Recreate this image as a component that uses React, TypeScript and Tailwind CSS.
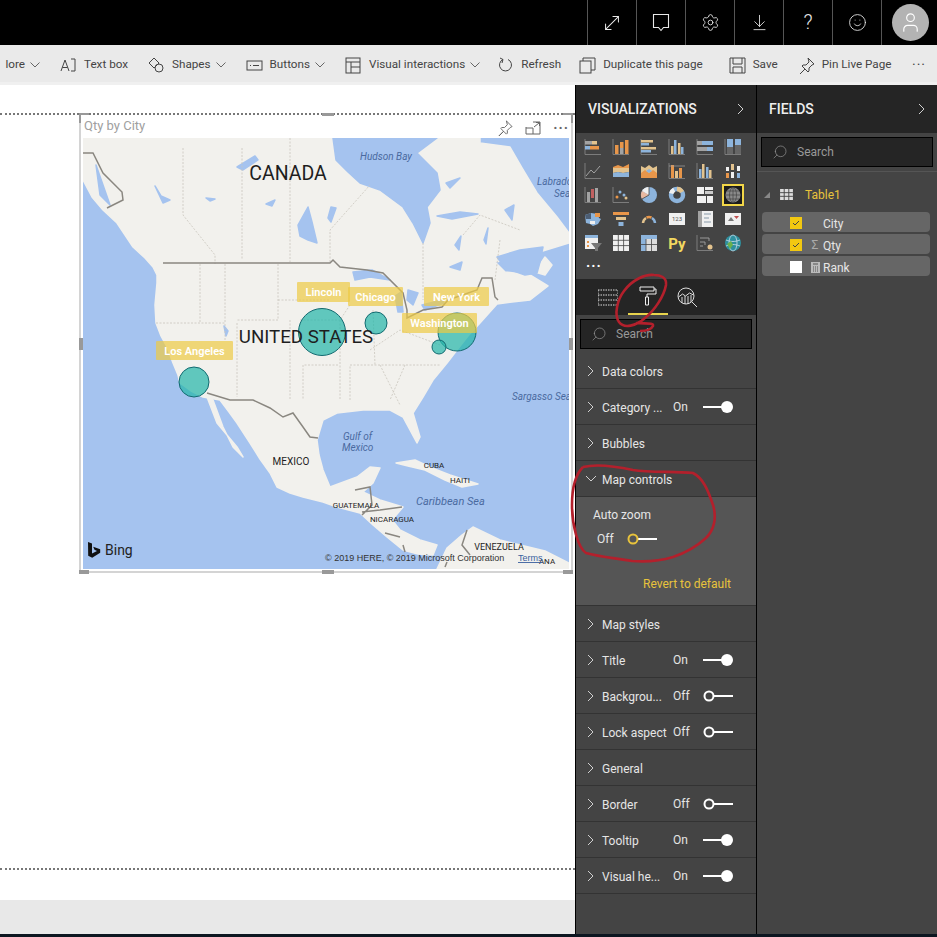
import type { ReactNode } from "react";
import { ArrowDownToLine, MoveDiagonal, Search, Settings, Smile, User } from "lucide-react";

const O = "#e8964a";
const B = "#8db4dc";
const T = "#e3c38e";
const G = "#a3a3a3";
const W = "#f0f0f0";
const A = "#8a8a8a";

function Chevron({ open = false }: { open?: boolean }) {
  return (
    <svg width="10" height="12" viewBox="0 0 10 12" fill="none" stroke="#d0d0d0" strokeWidth="1">
      {open ? <path d="M0 3l5 5 5-5" /> : <path d="M2 1l5 5-5 5" />}
    </svg>
  );
}

function Down() {
  return (
    <svg width="10" height="6" viewBox="0 0 10 6" fill="none" stroke="#666" strokeWidth="1">
      <path d="M0.5 0.5l4.5 4.5 4.5-4.5" />
    </svg>
  );
}

function Toggle({ on }: { on: boolean }) {
  return (
    <svg width="30" height="14" viewBox="0 0 30 14">
      {on ? (
        <>
          <rect x="0" y="6" width="20" height="2" fill="#fff" />
          <circle cx="24" cy="7" r="6" fill="#fff" />
        </>
      ) : (
        <>
          <rect x="10" y="6" width="20" height="2" fill="#fff" />
          <circle cx="6" cy="7" r="4.5" fill="none" stroke="#fff" strokeWidth="2" />
        </>
      )}
    </svg>
  );
}

function Section({ label, state }: { label: string; state?: "On" | "Off" }) {
  return (
    <div className="flex h-9 items-center border-b border-[#333] pl-[10px] pt-[1px]">
      <div className="w-4">
        <Chevron />
      </div>
      <div className="w-[71px] whitespace-nowrap pt-[2px] text-[#e6e6e6]">{label}</div>
      {state && (
        <>
          <div className="w-[30px] text-[#e6e6e6]">{state}</div>
          <Toggle on={state === "On"} />
        </>
      )}
    </div>
  );
}

function ToolItem({ icon, label, menu, className = "" }: { icon: ReactNode; label: string; menu?: boolean; className?: string }) {
  return (
    <div className={`flex items-center gap-[7px] whitespace-nowrap ${className}`}>
      {icon}
      <span>{label}</span>
      {menu && (
        <span className="ml-[-2px]">
          <Down />
        </span>
      )}
    </div>
  );
}

function ToolIcon({ children }: { children: ReactNode }) {
  return (
    <svg width="17" height="17" viewBox="0 0 17 17" fill="none" stroke="#444" strokeWidth="1">
      {children}
    </svg>
  );
}

function Viz({ children, selected = false }: { children: ReactNode; selected?: boolean }) {
  return (
    <div className={selected ? "flex h-[22px] w-[22px] items-center justify-center border-2 border-[#f2d648] bg-[#1c1c1c]" : "flex h-[22px] w-[22px] items-center justify-center"}>
      <svg width="18" height="18" viewBox="0 0 18 18">
        {children}
      </svg>
    </div>
  );
}

const axis = <path d="M1 1v15.5h16" fill="none" stroke={A} strokeWidth="0.8" />;

const vizIcons: ReactNode[] = [
  <>{axis}<rect x="1" y="3" width="7" height="3.5" fill={G} /><rect x="8" y="3" width="5" height="3.5" fill={T} /><rect x="1" y="8" width="5" height="3.5" fill={B} /><rect x="6" y="8" width="9" height="3.5" fill={O} /></>,
  <>{axis}<rect x="3" y="7" width="3.5" height="9" fill={O} /><rect x="8" y="4" width="3.5" height="6" fill={O} /><rect x="8" y="10" width="3.5" height="6" fill={G} /><rect x="13" y="2" width="3.5" height="14" fill={O} /></>,
  <>{axis}<rect x="1" y="2" width="12" height="2.5" fill={T} /><rect x="1" y="5" width="8" height="2.5" fill={B} /><rect x="1" y="9" width="15" height="2.5" fill={T} /><rect x="1" y="12" width="10" height="2.5" fill={B} /></>,
  <>{axis}<rect x="3" y="8" width="2.5" height="8" fill={T} /><rect x="6" y="2" width="2.5" height="14" fill={B} /><rect x="10" y="5" width="2.5" height="11" fill={T} /><rect x="13" y="9" width="2.5" height="7" fill={B} /></>,
  <>{axis}<rect x="1" y="3" width="5" height="4" fill={G} /><rect x="6" y="3" width="11" height="4" fill={B} /><rect x="1" y="9" width="10" height="4" fill={G} /><rect x="11" y="9" width="6" height="4" fill={B} /></>,
  <>{axis}<rect x="3" y="1" width="6" height="8" fill={B} /><rect x="3" y="9" width="6" height="7" fill="#666" /><rect x="11" y="1" width="6" height="6" fill={B} /><rect x="11" y="7" width="6" height="9" fill="#666" /></>,
  <>{axis}<path d="M2 14l5-6 3 3 6-7" fill="none" stroke={G} strokeWidth="1" /></>,
  <><path d="M1 5l5-2 5 2 6-3v4H1z" fill={O} /><path d="M1 6h16v4l-6 1-5-1-5 1z" fill={T} /><path d="M1 11l5-1 5 1 6-1v5H1z" fill={B} /></>,
  <><path d="M1 4l4 2 4-3 4 3 4-2v7H1z" fill={T} /><path d="M1 11l4-3 4 3 4-3 4 3v5H1z" fill={O} /><path d="M6 9l3-2 3 2-3 2z" fill={B} /></>,
  <>{axis}<rect x="3" y="3" width="3" height="13" fill={O} /><rect x="7" y="9" width="3" height="7" fill={T} /><rect x="11" y="6" width="3" height="10" fill={O} /><path d="M1 4h16" stroke={G} strokeWidth="0.7" /></>,
  <>{axis}<rect x="3" y="7" width="2.5" height="9" fill={B} /><rect x="6" y="2" width="2.5" height="14" fill={T} /><rect x="10" y="5" width="2.5" height="11" fill={B} /><rect x="13" y="8" width="2.5" height="8" fill={T} /></>,
  <><rect x="2" y="5" width="3" height="4" fill={W} /><rect x="2" y="11" width="3" height="5" fill={O} /><rect x="7" y="2" width="3" height="6" fill={T} /><rect x="7" y="10" width="3" height="6" fill={W} /><rect x="13" y="4" width="3" height="5" fill={W} /><rect x="13" y="11" width="3" height="5" fill={B} /></>,
  <>{axis}<rect x="3" y="6" width="3" height="10" fill={G} /><rect x="7" y="3" width="3" height="9" fill="#c06060" /><rect x="11" y="2" width="3" height="14" fill={G} /></>,
  <>{axis}<circle cx="5" cy="11" r="1.5" fill={O} /><circle cx="8" cy="6" r="1.5" fill={B} /><circle cx="12" cy="9" r="1.5" fill={B} /><circle cx="14" cy="12" r="1.5" fill={T} /></>,
  <><circle cx="9" cy="9" r="8" fill={B} /><path d="M9 9V1a8 8 0 0 0-7 4z" fill={W} /><path d="M9 9L2 5a8 8 0 0 0 0 8z" fill="#e8b8a0" /><path d="M9 1v8l-7 4" fill="none" stroke="#444" strokeWidth="0.8" /></>,
  <><circle cx="9" cy="9" r="6" fill="none" stroke={B} strokeWidth="4.5" /><path d="M9 3a6 6 0 0 1 5 3" fill="none" stroke={T} strokeWidth="4.5" /><path d="M3.2 7.5a6 6 0 0 1 3-3.8" fill="none" stroke={W} strokeWidth="4.5" /></>,
  <><rect x="1" y="1" width="7" height="7" fill={W} /><rect x="9" y="1" width="8" height="3" fill={W} /><rect x="9" y="5" width="8" height="3" fill="#ccc" /><rect x="1" y="10" width="9" height="7" fill={W} /><rect x="11" y="10" width="6" height="7" fill={W} /></>,
  <><circle cx="9" cy="9" r="7.5" fill="#8a8a8a" /><path d="M1.5 9h15M9 1.5v15M3 5h12M3 13h12" stroke="#444" strokeWidth="0.7" /><ellipse cx="9" cy="9" rx="3.5" ry="7.5" fill="none" stroke="#444" strokeWidth="0.7" /></>,
  <><path d="M1 5l6-2 7 1 1 4 2 1-3 5-5 2-3-2-4-1z" fill={B} /><path d="M1 5l6-2v6H2z" fill="#4d5e74" /><path d="M11 3h5v4h-5z" fill={O} /><path d="M6 11h5v3H6z" fill={W} /></>,
  <><rect x="1" y="2" width="16" height="3" fill={O} /><rect x="4" y="7" width="10" height="3" fill={T} /><rect x="6.5" y="12" width="5" height="4" fill={B} /></>,
  <><path d="M3 13a6.5 6.5 0 0 1 3-5" fill="none" stroke={T} strokeWidth="2.5" /><path d="M6.5 7.5a6.5 6.5 0 0 1 5 0" fill="none" stroke={O} strokeWidth="2.5" /><path d="M12 8a6.5 6.5 0 0 1 3 5" fill="none" stroke={B} strokeWidth="2.5" /></>,
  <><rect x="1" y="3" width="16" height="12" fill={W} /><text x="9" y="11" fontSize="6" textAnchor="middle" fill="#555" fontFamily="Roboto, sans-serif">123</text></>,
  <><rect x="2" y="1" width="15" height="16" fill={W} /><rect x="2" y="1" width="4" height="16" fill={G} /><path d="M8 4h7M8 8h5M8 12h7" stroke="#8899aa" strokeWidth="1.2" /></>,
  <><rect x="1" y="3" width="16" height="12" fill={W} /><path d="M4 11l3-4 3 4z" fill="#777" /><path d="M10 6h5l-2.5 3z" fill="#c05050" /></>,
  <><rect x="1" y="1" width="13" height="14" fill={W} /><rect x="1" y="1" width="13" height="3" fill={B} /><rect x="3" y="7" width="2" height="2" fill={O} /><rect x="3" y="11" width="2" height="2" fill={O} /><path d="M7 9h11l-4 5v3h-3v-3z" fill="#777" /></>,
  <><rect x="1" y="1" width="16" height="16" fill={W} /><path d="M6.3 1v16M11.6 1v16M1 6.3h16M1 11.6h16" stroke="#444" strokeWidth="0.8" /></>,
  <><rect x="1" y="1" width="16" height="16" fill="#dcdcdc" /><rect x="1" y="1" width="16" height="4" fill={B} /><rect x="1" y="1" width="5" height="16" fill={B} /><path d="M6 5v12M11.5 5v12M1 10.5h16" stroke="#444" strokeWidth="0.8" /></>,
  <text x="9" y="15" fontSize="15" fontWeight="700" textAnchor="middle" fill="#f2d860" fontFamily="Roboto, sans-serif">Py</text>,
  <>{axis}<path d="M4 4h9M4 8h5M4 12h3M13 4v3M9 8v3" fill="none" stroke={G} strokeWidth="0.9" /><circle cx="14" cy="13" r="2.5" fill={T} /></>,
  <><circle cx="9" cy="9" r="8" fill="#2f8f9e" /><path d="M2 6c5 2 9 2 14 0M2 12c5-2 9-2 14 0" fill="none" stroke="#cde" strokeWidth="0.8" /><ellipse cx="9" cy="9" rx="4" ry="8" fill="none" stroke="#cde" strokeWidth="0.8" /><path d="M3 10l4-3 2 4-3 4z" fill="#6ab04c" /></>,
];

function MapCanvas() {
  const label = "Roboto, 'Liberation Sans', sans-serif";
  const pills: [number, number, number, number, string][] = [
    [297, 282, 53, 20, "Lincoln"],
    [348, 287, 55, 19, "Chicago"],
    [424, 287, 65, 19, "New York"],
    [402, 313, 75, 20, "Washington"],
    [156, 341, 77, 19, "Los Angeles"],
  ];
  return (
    <svg width="486" height="431" viewBox="83 138 486 431" fontFamily={label} className="block">
      <rect x="83" y="138" width="486" height="431" fill="#a5c3ef" />
      {/* land */}
      <g fill="#f2f1ed" stroke="#f2f1ed" strokeWidth="1.5" strokeLinejoin="round">
        <path d="M83 138V180L92 197L103 210L117 223L125 235L133 247L145 258L153 267L157 275L157 283L155 305L156 323L161 336L167 347L173 363L178 375L180 383L191 391L203 397L220 400L229 412L237 423L250 443L260 459L270 473L277 487L290 493L303 497L323 502L337 507L360 513L373 525L387 537L403 550L418 554L433 555L437 545L420 540L400 530L392 520L403 507L380 500L363 492L373 483L380 468L370 467L357 477L330 487L323 470L319 455L317 440L323 420L337 413L363 410L390 410L403 417L410 430L417 443L420 437L413 413L423 397L433 380L447 363L457 350L468 336L480 323L497 304L512 302L530 300L548 286L530 275L505 272L495 262L520 258L569 243V233L557 217L537 193L522 168L510 147L480 143V138Z" />
        <path d="M207 397L217 423L237 447L243 457L233 447L223 427L213 400Z" />
        <path d="M437 569L447 548L462 535L473 527L500 540L545 551L569 563V569Z" />
        <path d="M396 463L415 460L432 468L450 475L478 484L462 487L445 480L425 470L408 466Z" />
        <path d="M545 257L552 265L545 275L535 272Z" />
      </g>
      {/* hudson bay and lakes */}
      <g fill="#a5c3ef" stroke="#a5c3ef" strokeWidth="1.5" strokeLinejoin="round">
        <path d="M333 138L336 160L348 172L360 183L380 190L403 207L413 223L423 243L430 223L427 207L440 190L437 173L417 153L437 138Z" />
        <path d="M497 257L520 250L543 247L540 262L537 273L525 275L505 268Z" />
        <path d="M353 272L372 270L390 280L370 277L355 280Z" />
        <path d="M395 296L401 292L403 312L398 312Z" />
        <path d="M408 290L418 293L413 305L407 300Z" />
        <path d="M422 305L442 300L444 303L425 310Z" />
        <path d="M298 225L308 207L312 222L317 243L308 240L300 236Z" />
        <path d="M237 167L255 156L258 160L243 170Z" />
        <path d="M331 207L336 208L331 222L328 218Z" />
        <path d="M437 216L460 212L478 214L452 219Z" />
        <path d="M446 183L460 178L450 188Z" />
        <path d="M450 267L462 262L460 270Z" />
        <path d="M505 210L514 205L512 220Z" />
        <path d="M155 186L161 196L170 200L163 203Z" />
        <path d="M206 198L215 199L210 201Z" />
        <path d="M266 204L275 200L272 206Z" />
        <path d="M484 240L488 228L486 244Z" />
        <path d="M455 245L461 236L459 250Z" />
        <path d="M224 326L228 331L226 336Z" />
        <path d="M96 165L103 185L110 205L100 195Z" />
      </g>
      {/* state and province lines */}
      <g fill="none" stroke="#c9c5bc" strokeWidth="0.8" strokeDasharray="2 1.5">
        <path d="M183 148V215L215 255V264M242 148V260M290 138V262M330 262V230L370 185" />
        <path d="M423 243V300M500 240L495 280M463 235L480 215L520 230" />
        <path d="M200 264V323M156 323H225V340M225 264V323M237 323V397M278 264V320H237M278 300H330M300 320H340L350 305M290 320V400M340 320V400M338 365H303L303 400M350 400V365H440M380 365L400 405M405 365L390 400M370 350L400 330L440 345M373 310L375 365" />
      </g>
      {/* borders */}
      <g fill="none" stroke="#8a8780" strokeWidth="1.5">
        <path d="M83 153H93L103 173L122 192L123 200L107 208" />
        <path d="M163 263H330L333 260L340 267L367 270L383 273L403 293L407 310V318L423 310L442 307L448 300L477 290L482 278H492L495 297L498 300" />
        <path d="M207 393L230 400H253L270 408L283 417L293 413L303 427L310 437L318 438" />
        <path d="M355 490L370 487L372 505L362 515M362 512L380 510L402 507M385 533L400 537M403 545L405 552M467 530L462 545L470 555M445 567L447 562" />
      </g>
      {/* bubbles */}
      <g fill="#27b7aa" fillOpacity="0.72" stroke="#126a70" strokeWidth="1">
        <circle cx="322" cy="332" r="23.5" />
        <circle cx="376" cy="323" r="11" />
        <circle cx="457" cy="332" r="19" />
        <circle cx="439" cy="347" r="7" />
        <circle cx="194" cy="382" r="15" />
      </g>
      {/* place names */}
      <g textAnchor="middle" fill="#1e1e1e">
        <text x="288" y="180" fontSize="19.5">CANADA</text>
        <text x="306" y="343" fontSize="18.7">UNITED STATES</text>
        <text x="291" y="465" fontSize="10">MEXICO</text>
        <text x="434" y="468" fontSize="8">CUBA</text>
        <text x="460" y="483" fontSize="8">HAITI</text>
        <text x="356" y="508" fontSize="8">GUATEMALA</text>
        <text x="392" y="522" fontSize="8">NICARAGUA</text>
        <text x="499" y="550" fontSize="9">VENEZUELA</text>
        <text x="547" y="564" fontSize="8">ANA</text>
      </g>
      <g fill="#4a6a9f" fontStyle="italic" fontSize="10">
        <text x="360" y="160">Hudson Bay</text>
        <text x="537" y="185">Labrador</text>
        <text x="554" y="197">Sea</text>
        <text x="512" y="400">Sargasso Sea</text>
        <text x="343" y="440">Gulf of</text>
        <text x="342" y="451">Mexico</text>
        <text x="416" y="505" fontSize="11">Caribbean Sea</text>
      </g>
      <text x="325" y="561" fontSize="9" fill="#333" fontFamily="'Liberation Sans', sans-serif">© 2019 HERE, © 2019 Microsoft Corporation</text>
      <text x="518" y="561" fontSize="9" fill="#3a5f9f" textDecoration="underline" fontFamily="'Liberation Sans', sans-serif">Terms</text>
      {/* bing logo */}
      <path d="M88 542l4 1.5v10l5-2.5-2.5-1.2-1.3-3 7 2.5v3.5l-8 5-4-2z" fill="#111" />
      <text x="105" y="555" fontSize="14" fill="#222">Bing</text>
      {/* data labels */}
      {pills.map(([x, y, w, h, name]) => (
        <g key={name}>
          <rect x={x} y={y} width={w} height={h} rx="1" fill="#eecb45" fillOpacity="0.7" />
          <text x={x + w / 2} y={y + h / 2 + 4} fontSize="11" fontWeight="600" textAnchor="middle" fill="#fff">
            {name}
          </text>
        </g>
      ))}
    </svg>
  );
}

export default function App() {
  return (
    <div className="relative flex h-[937px] w-[937px] flex-col overflow-hidden bg-white font-['Roboto','Liberation_Sans',sans-serif] text-xs">
      {/* top bar */}
      <div className="flex h-[45px] shrink-0 justify-end bg-black text-[#e8e8e8]">
        {[
          <MoveDiagonal key="a" size={22} strokeWidth={1.1} />,
          <svg key="b" width="18" height="20" viewBox="0 0 18 20" fill="none" stroke="#e8e8e8" strokeWidth="1.1"><path d="M1.5 1.5h15v13h-5l-2.5 3-2.5-3h-5z" /></svg>,
          <Settings key="c" size={19} strokeWidth={1.1} />,
          <ArrowDownToLine key="d" size={19} strokeWidth={1.1} />,
          <span key="e" className="text-[20px] font-light">?</span>,
          <Smile key="f" size={19} strokeWidth={1.1} />,
        ].map((icon, i) => (
          <div key={i} className="flex w-[49px] items-center justify-center border-l border-[#555]">
            {icon}
          </div>
        ))}
        <div className="flex w-[56px] items-center justify-center border-l border-[#555] pl-[1px]">
          <div className="flex h-[37px] w-[37px] items-center justify-center rounded-full bg-[#b3b3b3]">
            <User size={23} strokeWidth={1.2} color="#fff" />
          </div>
        </div>
      </div>

      {/* toolbar */}
      <div className="flex h-[40px] shrink-0 items-center gap-5 border-b-[3px] border-[#f0f0f0] bg-[#eaeaea] pr-[11px] pt-[3px] text-[11.7px] text-[#444]">
        <div className="flex items-center gap-[5px]">
          <span className="w-[25px] text-right">lore</span>
          <Down />
        </div>
        <ToolItem label="Text box" icon={<ToolIcon><path d="M1 14L5 3l4 11M2.5 10.5h5M11 2h4v12h-4" /></ToolIcon>} />
        <ToolItem label="Shapes" menu icon={<ToolIcon><path d="M6 1l5 5-5 5-5-5z" /><circle cx="11" cy="11" r="4" /></ToolIcon>} />
        <ToolItem label="Buttons" menu icon={<ToolIcon><rect x="1" y="4" width="15" height="9" /><path d="M4 8.5h1M7 8.5h6" /></ToolIcon>} />
        <ToolItem label="Visual interactions" menu icon={<ToolIcon><rect x="1" y="1" width="14" height="15" /><path d="M1 5h14M6 5v11M6 10h9" /></ToolIcon>} />
        <ToolItem label="Refresh" className="-ml-[3px]" icon={<ToolIcon><path d="M6 2.5a6 6 0 1 0 5 0M3 1l3 1.5L5 6" /></ToolIcon>} />
        <ToolItem label="Duplicate this page" className="-ml-[2px]" icon={<ToolIcon><rect x="1" y="4" width="11" height="12" /><path d="M4 4V1h12v12h-4" /></ToolIcon>} />
        <ToolItem label="Save" className="ml-[6px]" icon={<ToolIcon><path d="M1 1h15v15H1zM4 1v6h9V1M4 16v-6h9v6" /></ToolIcon>} />
        <ToolItem label="Pin Live Page" icon={<ToolIcon><path d="M10 1l6 6-2 1-3 3v3l-1 1-3-3-5 5 5-5-3-3 1-1h3l3-3z" /></ToolIcon>} />
        <div className="ml-auto text-[14px] tracking-[1px]">···</div>
      </div>

      <div className="flex min-h-0 flex-1">
        {/* report canvas */}
        <div className="flex w-[575px] shrink-0 flex-col">
          <div className="flex-1 pt-[28px]">
            <div className="relative h-[757px] border-y-2 border-dotted border-[#777] pl-[79px] pt-[1px]">
              <div className="relative h-[457px] w-[494px] border-x-2 border-b-2 border-[#d4d4d4] bg-white pl-[2px]">
                <div className="flex h-[22px] items-center justify-between pb-[3px] pl-[1px] pr-[4px] text-[13px] text-[#a0a0a0]">
                  <span>Qty by City</span>
                </div>
                <MapCanvas />
                {/* visual header */}
                <div className="absolute right-[2px] top-[2px] flex h-[19px] items-center gap-3 bg-white pl-[3px] text-[#666]">
                  <svg width="16" height="16" viewBox="0 0 17 17" fill="none" stroke="#666" strokeWidth="1"><path d="M10 1l6 6-2 1-3 3v3l-1 1-3-3-5 5 5-5-3-3 1-1h3l3-3z" /></svg>
                  <svg width="16" height="14" viewBox="0 0 16 14" fill="none" stroke="#666" strokeWidth="1"><path d="M1 6v7h14V1H8M1 7h7v6M9 6l5-4M11 1.5h3.5V5" /></svg>
                  <span className="text-[14px] font-bold leading-none tracking-[1px]">···</span>
                </div>
                {/* resize handles */}
                <div className="absolute left-[-2px] top-[-3px] h-[2px] w-[10px] bg-[#999]" />
                <div className="absolute left-[-2px] top-[-3px] h-[10px] w-[2px] bg-[#999]" />
                <div className="absolute right-[-2px] top-[-3px] h-[2px] w-[10px] bg-[#999]" />
                <div className="absolute right-[-2px] top-[-3px] h-[10px] w-[2px] bg-[#999]" />
                <div className="absolute left-[-2px] top-[222px] h-[12px] w-[4px] bg-[#999]" />
                <div className="absolute right-[-2px] top-[222px] h-[12px] w-[4px] bg-[#999]" />
                <div className="absolute left-[241px] top-[-3px] h-[3px] w-[12px] bg-[#999]" />
                <div className="absolute bottom-[-3px] left-[241px] h-[4px] w-[12px] bg-[#999]" />
                <div className="absolute bottom-[-3px] left-[-2px] h-[4px] w-[10px] bg-[#999]" />
                <div className="absolute bottom-[-3px] right-[-2px] h-[4px] w-[10px] bg-[#999]" />
              </div>
            </div>
          </div>
          <div className="h-[34px] shrink-0 bg-[#e8e8e8]" />
        </div>

        {/* visualizations pane */}
        <div className="flex w-[182px] shrink-0 flex-col border-x border-black bg-[#444] text-[12px]">
          <div className="flex h-12 shrink-0 items-center justify-between bg-[#252525] pl-3 pr-[10px] text-[14px] font-medium text-[#eee]">
            <span>VISUALIZATIONS</span>
            <Chevron />
          </div>
          <div className="h-[146px] shrink-0 px-[6px] pt-[3px]">
            <div className="grid grid-cols-[repeat(6,28px)] grid-rows-[repeat(5,24px)]">
              {vizIcons.map((icon, i) => (
                <Viz key={i} selected={i === 17}>{icon}</Viz>
              ))}
            </div>
            <div className="pl-[4px] text-[14px] font-bold leading-[20px] tracking-[1px] text-white">···</div>
          </div>
          <div className="flex h-9 shrink-0 bg-[#252525]">
            <div className="flex w-[52px] items-center justify-end pr-[10px]">
              <svg width="20" height="17" viewBox="0 0 20 17" fill="none" stroke="#ddd" strokeWidth="1" strokeDasharray="1.5 1"><path d="M0 1h20M0 6h20M0 11h20M0 16h20M0 1v15M20 1v15" /></svg>
            </div>
            <div className="flex w-10 items-center justify-center border-b-2 border-[#e8d44d]">
              <svg width="18" height="20" viewBox="0 0 18 20" fill="none" stroke="#eee" strokeWidth="1"><path d="M1 1h14v4H1zM15 3h2v5H8v3M6.5 11h3v8h-3z" /></svg>
            </div>
            <div className="flex w-[38px] items-center justify-center">
              <svg width="21" height="21" viewBox="0 0 21 21" fill="none" stroke="#ddd" strokeWidth="1"><circle cx="9" cy="9" r="8" /><path d="M1.5 10l4-3 3 2 4-3 4 2M5 16v-6M8 17V9M11 17v-8M14 15V8M15 15l5 5" /></svg>
            </div>
          </div>
          <div className="shrink-0 px-1 pt-1">
            <div className="flex h-[30px] items-center gap-[9px] border border-black bg-[#252525] pl-[10px] text-[#999]">
              <Search size={16} strokeWidth={1} className="-scale-x-100" />
              <span>Search</span>
            </div>
          </div>
          <div className="flex-1 pt-[4px]">
            <Section label="Data colors" />
            <Section label="Category ..." state="On" />
            <Section label="Bubbles" />
            <div className="flex h-9 items-center border-b border-[#333] pl-[10px] pt-[1px] text-[#e6e6e6]">
              <div className="w-4">
                <Chevron open />
              </div>
              <span className="pt-[2px]">Map controls</span>
            </div>
            <div className="h-[109px] border-b border-[#333] bg-[#555] pl-[17px] pt-[10px] text-[#e6e6e6]">
              <div>Auto zoom</div>
              <div className="mt-[7px] flex items-center gap-[12px] pl-[4px]">
                <span className="w-[18px] pt-[1px]">Off</span>
                <svg width="30" height="14" viewBox="0 0 30 14">
                  <rect x="10" y="6" width="20" height="2" fill="#fff" />
                  <circle cx="6" cy="7" r="4.5" fill="none" stroke="#e8c33c" strokeWidth="2" />
                </svg>
              </div>
              <div className="mt-[29px] pr-[25px] text-right text-[#e8c33c]">Revert to default</div>
            </div>
            <Section label="Map styles" />
            <Section label="Title" state="On" />
            <Section label="Backgrou..." state="Off" />
            <Section label="Lock aspect" state="Off" />
            <Section label="General" />
            <Section label="Border" state="Off" />
            <Section label="Tooltip" state="On" />
            <Section label="Visual he..." state="On" />
          </div>
        </div>

        {/* fields pane */}
        <div className="flex flex-1 flex-col bg-[#444] text-[12px] text-[#e6e6e6]">
          <div className="flex h-12 shrink-0 items-center justify-between bg-[#252525] pl-3 pr-[10px] text-[14px] font-medium text-[#eee]">
            <span>FIELDS</span>
            <Chevron />
          </div>
          <div className="shrink-0 border-b border-[#555] px-1 pb-[4px] pt-1">
            <div className="flex h-[30px] items-center gap-[9px] border border-black bg-[#252525] pl-[10px] text-[#999]">
              <Search size={16} strokeWidth={1} className="-scale-x-100" />
              <span>Search</span>
            </div>
          </div>
          <div className="flex h-[40px] items-center pl-[7px] pt-[5px] text-[#e8c33c]">
            <svg width="6" height="6" viewBox="0 0 6 6" className="mr-[10px]"><path d="M6 0v6H0z" fill="#888" /></svg>
            <svg width="13" height="11" viewBox="0 0 14 12" className="mr-[12px]"><rect width="14" height="12" fill="#ddd" /><path d="M0 4h14M0 8h14M4.5 0v12M9.5 0v12" stroke="#444" strokeWidth="1" /></svg>
            Table1
          </div>
          <div className="flex flex-col gap-[2px] pl-[5px] pr-[7px]">
            {[
              { name: "City", on: true, icon: null },
              { name: "Qty", on: true, icon: <span className="text-[#aaa]">Σ</span> },
              { name: "Rank", on: false, icon: <svg width="9" height="11" viewBox="0 0 9 11"><rect width="9" height="11" fill="#bbb" /><path d="M2 2h5M2 5h1M4 5h1M6 5h1M2 7h1M4 7h1M6 7h1M2 9h1M4 9h1M6 9h1" stroke="#555" /></svg> },
            ].map((f) => (
              <div key={f.name} className="flex h-5 items-center rounded-sm bg-[#666] pl-[28px] pt-[2px]">
                <span className={f.on ? "mr-[5px] flex h-3 w-3 items-center justify-center bg-[#f2c811]" : "mr-[5px] h-3 w-3 bg-white"}>
                  {f.on && <svg width="8" height="8" viewBox="0 0 8 8" fill="none" stroke="#444" strokeWidth="1"><path d="M1 4l2 2 4-4" /></svg>}
                </span>
                <span className="flex w-[16px] justify-center">{f.icon}</span>
                <span className="pt-[1px]">{f.name}</span>
              </div>
            ))}
          </div>
        </div>
      </div>

      <div className="h-[3px] shrink-0 bg-[#0c1620]" />

      {/* red pen marks on the screenshot */}
      <svg className="pointer-events-none absolute left-0 top-0" width="937" height="937" viewBox="0 0 937 937" fill="none" stroke="#b3202c" strokeWidth="2.6">
        <path d="M654 275C645 274 632 280 624 291C617 300 614 315 619 322C624 329 636 326 645 318C655 310 664 296 666 285C667 277 660 275 654 275M636 323C645 324 654 322 653 326C651 330 645 331 640 331" />
        <path d="M583 467C595 464 610 465 633 470C650 473 675 471 693 473C703 478 708 490 713 505C717 518 714 530 706 538C695 548 685 553 673 557C660 561 645 562 632 561C615 558 600 557 586 553C578 548 572 525 572 505C572 490 575 475 583 467" />
      </svg>
    </div>
  );
}
